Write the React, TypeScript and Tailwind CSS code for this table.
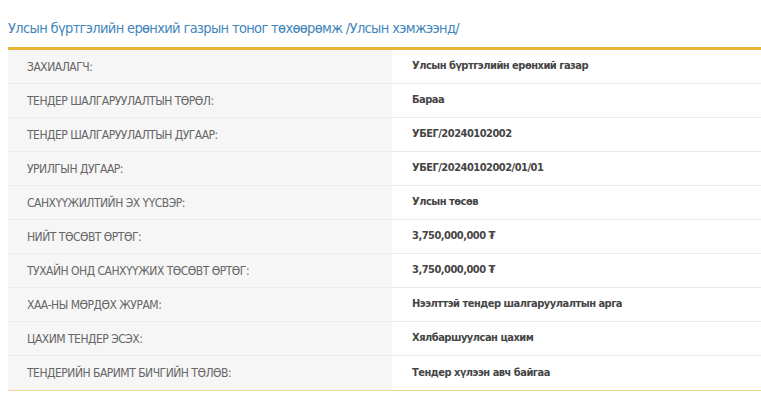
const rows: [string, string][] = [
  ['ЗАХИАЛАГЧ:', 'Улсын бүртгэлийн ерөнхий газар'],
  ['ТЕНДЕР ШАЛГАРУУЛАЛТЫН ТӨРӨЛ:', 'Бараа'],
  ['ТЕНДЕР ШАЛГАРУУЛАЛТЫН ДУГААР:', 'УБЕГ/20240102002'],
  ['УРИЛГЫН ДУГААР:', 'УБЕГ/20240102002/01/01'],
  ['САНХҮҮЖИЛТИЙН ЭХ ҮҮСВЭР:', 'Улсын төсөв'],
  ['НИЙТ ТӨСӨВТ ӨРТӨГ:', '3,750,000,000 ₮'],
  ['ТУХАЙН ОНД САНХҮҮЖИХ ТӨСӨВТ ӨРТӨГ:', '3,750,000,000 ₮'],
  ['ХАА-НЫ МӨРДӨХ ЖУРАМ:', 'Нээлттэй тендер шалгаруулалтын арга'],
  ['ЦАХИМ ТЕНДЕР ЭСЭХ:', 'Хялбаршуулсан цахим'],
  ['ТЕНДЕРИЙН БАРИМТ БИЧГИЙН ТӨЛӨВ:', 'Тендер хүлээн авч байгаа'],
];

export default function App() {
  return (
    <div
      className="w-[761px] h-[398px] bg-white pl-2 pt-[17px] overflow-hidden"
      style={{ fontFamily: '"DejaVu Sans Condensed", "Liberation Sans Narrow", Roboto, sans-serif' }}
    >
      {/* Title */}
      <h2 className="text-[14.5px] leading-[22px] tracking-[-0.65px] text-[#4285bb] mb-[8px] whitespace-nowrap">
        Улсын бүртгэлийн ерөнхий газрын тоног төхөөрөмж /Улсын хэмжээнд/
      </h2>

      {/* Info table */}
      <div className="border-t-[3px] border-b border-t-[#e8b535] border-b-[#f0d590]">
        {rows.map(([label, value], i) => (
          <div
            key={i}
            className={`grid grid-cols-[384px_1fr] h-[34px] ${i < rows.length - 1 ? 'border-b border-[#ebebeb]' : ''}`}
          >
            <div className="bg-[#f6f6f6] flex items-center pl-[19px] text-[12px] tracking-[-0.5px] text-[#666]">
              {label}
            </div>
            <div className="flex items-center pl-[20px] text-[11px] tracking-[-0.5px] font-bold text-[#454545]">
              {value}
            </div>
          </div>
        ))}
      </div>
    </div>
  );
}
